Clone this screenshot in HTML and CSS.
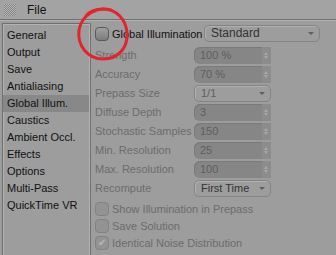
FILE: index.html
```html
<!DOCTYPE html>
<html lang="en">
	<head>
		<meta charset="UTF-8" />
		<title>Render Settings</title>
		<link rel="stylesheet" href="styles.css">
	</head>
	<body>
		<div class="titlebar">
			<span class="grip"></span>
			<span class="menu">File</span>
		</div>
		<div class="main">
			<ul class="pages">
				<li>General</li>
				<li>Output</li>
				<li>Save</li>
				<li>Antialiasing</li>
				<li class="active">Global Illum.</li>
				<li>Caustics</li>
				<li>Ambient Occl.</li>
				<li>Effects</li>
				<li>Options</li>
				<li>Multi-Pass</li>
				<li>QuickTime VR</li>
			</ul>
			<div class="settings">
				<div class="head-row">
					<span class="check enabled"></span>
					<span class="head-label">Global Illumination</span>
					<span class="dropdown wide">Standard<span class="arrow"></span></span>
				</div>
				<div class="grid">
					<span class="label">Strength</span>
					<span class="number">100 %<span class="stepper"></span></span>
					<span class="label">Accuracy</span>
					<span class="number">70 %<span class="stepper"></span></span>
					<span class="label">Prepass Size</span>
					<span class="dropdown dim">1/1<span class="arrow"></span></span>
					<span class="label">Diffuse Depth</span>
					<span class="number">3<span class="stepper"></span></span>
					<span class="label">Stochastic Samples</span>
					<span class="number">150<span class="stepper"></span></span>
					<span class="label">Min. Resolution</span>
					<span class="number">25<span class="stepper"></span></span>
					<span class="label">Max. Resolution</span>
					<span class="number">100<span class="stepper"></span></span>
					<span class="label">Recompute</span>
					<span class="dropdown">First Time<span class="arrow"></span></span>
				</div>
				<div class="options">
					<div class="option"><span class="check"></span>Show Illumination in Prepass</div>
					<div class="option"><span class="check"></span>Save Solution</div>
					<div class="option"><span class="check checked">&#10004;</span>Identical Noise Distribution</div>
				</div>
			</div>
		</div>
		<svg class="mark" width="56" height="58" viewBox="0 0 56 58">
			<path d="M36 6 C23 2 7 10 4 26 C2 42 13 55 28 55 C43 55 53 44 52 29 C51 15 41 5 28 5 C20 5 14 8 11 12" fill="none" stroke="#e3232d" stroke-width="3" stroke-linecap="round" />
		</svg>
	</body>
</html>
```

FILE: styles.css
```css
:root {
	--bg: #9d9d9d;
	--title-bg: #a3a3a3;
	--text: #111;
	--dim-text: #6c6c6c;
	--field-bg: #868686;
	--field-text: #5e5e5e;
	--line-dark: #6f6f6f;
	--line-light: #b2b2b2;
	--active-bg: #888;
}
body {
	margin: 0;
	width: 336px;
	height: 255px;
	overflow: hidden;
	position: relative;
	background-color: var(--bg);
	font-family: "Liberation Sans", Arial, sans-serif;
	font-size: 11px;
	color: var(--text);
}
.titlebar {
	height: 19px;
	display: flex;
	align-items: center;
	background-color: var(--title-bg);
	border-bottom: 1px solid var(--line-dark);
	box-shadow: 0 1px 0 var(--line-light);
}
.grip {
	width: 12px;
	height: 12px;
	margin-left: 4px;
	background: conic-gradient(#848484 25%, #b6b6b6 0 50%, #848484 0 75%, #b6b6b6 0) 0 0 / 2px 2px;
}
.menu {
	margin-left: 11px;
	font-size: 12px;
}
.main {
	display: flex;
	margin-top: 3px;
	height: 233px;
}
.pages {
	list-style: none;
	margin: 0 0 0 2px;
	padding: 3px 0 0;
	width: 86px;
	border-left: 1px solid var(--line-dark);
	border-top: 1px solid var(--line-dark);
	border-right: 1px solid var(--line-light);
	box-shadow: inset 1px 1px 0 var(--line-light), 1px 0 0 var(--line-dark);
}
.pages li {
	height: 17px;
	line-height: 17px;
	padding-left: 4px;
	white-space: nowrap;
}
.pages .active {
	background-color: var(--active-bg);
}
.settings {
	padding: 2px 0 0 5px;
	flex: 1;
}
.head-row {
	display: flex;
	align-items: center;
	height: 17px;
}
.head-label {
	margin-left: 3px;
	width: 92px;
}
.check {
	width: 12px;
	height: 12px;
	border: 1px solid #828282;
	border-radius: 4px;
	background-color: #939393;
	color: #b8b8b8;
	font-size: 10px;
	line-height: 12px;
	text-align: center;
	flex-shrink: 0;
}
.check.enabled {
	border-color: #5a5a5a;
	background: linear-gradient(#a0a0a0, #7c7c7c);
}
.dropdown {
	position: relative;
	height: 15px;
	line-height: 15px;
	padding-left: 6px;
	border: 1px solid #848484;
	border-radius: 5px;
	box-shadow: inset 1px 1px 0 #b0b0b0;
	color: #333;
}
.dropdown.wide {
	width: 108px;
	font-size: 12px;
}
.dropdown.dim {
	color: var(--field-text);
}
.arrow {
	position: absolute;
	right: 5px;
	top: 6px;
	border-left: 3px solid transparent;
	border-right: 3px solid transparent;
	border-top: 3px solid #5f5f5f;
}
.grid {
	display: grid;
	grid-template-columns: 99px 77px;
	grid-auto-rows: 17px;
	row-gap: 2px;
	margin-top: 5px;
}
.label {
	line-height: 17px;
	color: var(--dim-text);
	white-space: nowrap;
}
.number {
	position: relative;
	line-height: 17px;
	padding-left: 6px;
	background-color: var(--field-bg);
	border-radius: 6px 0 0 6px;
	color: var(--field-text);
	box-shadow: inset 1px 1px 0 #7a7a7a;
}
.stepper {
	position: absolute;
	right: 0;
	top: 0;
	width: 9px;
	height: 17px;
	background-color: #8c8c8c;
}
.stepper::before,
.stepper::after {
	content: "";
	position: absolute;
	left: 2px;
	border-left: 2px solid transparent;
	border-right: 2px solid transparent;
}
.stepper::before {
	top: 5px;
	border-bottom: 3px solid #a8a8a8;
}
.stepper::after {
	top: 9px;
	border-top: 3px solid #a8a8a8;
}
.options {
	margin-top: 4px;
}
.option {
	display: flex;
	align-items: center;
	height: 16px;
	gap: 3px;
	color: var(--dim-text);
	margin-bottom: 1px;
}
.mark {
	position: absolute;
	left: 75px;
	top: 4px;
}
```
